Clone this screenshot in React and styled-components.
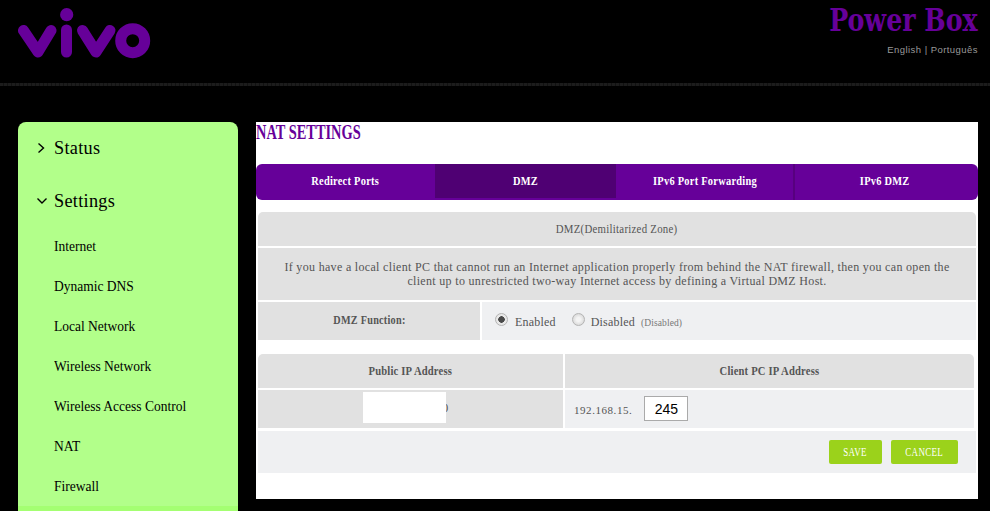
import React from "react";
import styled, { createGlobalStyle } from "styled-components";

const Global = createGlobalStyle`
  html, body { margin: 0; padding: 0; background: #000; height: 511px; overflow: hidden; }
  #root { height: 511px; overflow: hidden; }
  * { box-sizing: border-box; }
`;
const serif = `"Liberation Serif", serif`;

const Page = styled.div`
  width: 990px; height: 511px; overflow: hidden; background: #000;
  display: flex; flex-direction: column;
`;
const Header = styled.header`
  height: 83px; display: flex; justify-content: space-between; padding: 0 12px 0 18px;
  flex: none;
`;
const Logo = styled.svg`
  width: 134px; height: 52px; margin-top: 8px;
`;
const Brand = styled.div`
  display: flex; flex-direction: column; align-items: flex-end;
`;
const Squeeze = styled.span`
  display: inline-block; white-space: nowrap; transform: scaleX(${p => p.$x});
  transform-origin: ${p => p.$origin || "center"};
`;
const BrandName = styled.div`
  font: bold 31px/34px "DejaVu Serif Condensed", "DejaVu Serif", serif; color: #660099; margin-top: 3px;
`;
const Lang = styled.div`
  font: 9.5px/12px "Liberation Sans", sans-serif; letter-spacing: 0.45px; color: #999; margin-top: 7px;
`;
const Rule = styled.div`
  height: 3px; flex: none;
  background: repeating-linear-gradient(90deg, #1c1c1c 0 3px, #111 3px 4px);
`;
const Main = styled.div`
  display: flex; padding: 36px 12px 0 18px; gap: 18px; flex: 1; min-height: 0; align-items: flex-start;
`;
const Side = styled.nav`
  width: 220px; height: 420px; flex: none; background: #b2ff8a; border-radius: 8px 8px 0 0;
  padding-top: 12px; color: #000; font-family: ${serif};
`;
const Top = styled.div`
  height: 28px; display: flex; align-items: center; font-size: 19px; letter-spacing: 0.3px;
  padding-left: 19px; gap: 9px; margin-bottom: ${p => p.$mb}px;
`;
const ChevRight = styled.svg`
  width: 8px; height: 12px; flex: none;
`;
const ChevDown = styled.svg`
  width: 10px; height: 8px; flex: none; margin-right: -2px;
`;
const Sub = styled.div`
  height: 40px; display: flex; align-items: center; padding-left: 36px; font-size: 15px;
`;
const Active = styled.div`
  height: 40px; background: #a4ff72;
`;
const Content = styled.section`
  width: 722px; height: 377px; flex: none; background: #fff; position: relative;
`;
const Title = styled.h1`
  margin: 0; font: bold 20px/20px ${serif}; color: #660099; height: 42px; white-space: nowrap;
`;
const Tabs = styled.div`
  height: 36px; display: grid; grid-template-columns: 179px 181px 177px 185px; background: #660099;
  border-radius: 6px; overflow: hidden;
`;
const Tab = styled.div`
  height: ${p => (p.$active ? "34px" : "36px")}; padding-bottom: ${p => (p.$active ? "0" : "2px")};
  padding-right: ${p => (p.$divided ? "4px" : "0")};
  background: ${p => (p.$active ? "#4f0073" : "transparent")};
  display: flex; align-items: center; justify-content: center; color: #fff;
  font: bold 12px ${serif}; letter-spacing: 0.3px;
  border-left: ${p => (p.$divided ? "2px solid #57007f" : "0")};
`;
const Body = styled.div`
  padding: 12px 2px 0;
`;
const Bar = styled.div`
  background: #e1e1e1; color: #555; font: 12px ${serif}; letter-spacing: 0.3px; text-align: center;
`;
const Heading = styled(Bar)`
  height: 34px; line-height: 34px; border-radius: 5px 5px 0 0; margin-bottom: 2px;
`;
const Desc = styled(Bar)`
  height: 52px; padding: 12px 22px 0; line-height: 14px; margin-bottom: 2px; letter-spacing: 0.32px;
`;
const Row = styled.div`
  display: grid; grid-template-columns: ${p => p.$cols}; gap: 2px; width: ${p => p.$w}px;
  margin-bottom: ${p => p.$mb || 0}px;
`;
const Label = styled(Bar)`
  height: 38px; line-height: 36px; font-weight: ${p => (p.$bold ? "bold" : "normal")};
`;
const Head = styled(Bar)`
  height: 34px; line-height: 34px; font-weight: bold; letter-spacing: 0.2px;
  border-radius: ${p => (p.$right ? "0 5px 0 0" : "5px 0 0 0")};
`;
const Cell = styled.div`
  height: 38px; background: #eff0f2; display: flex; align-items: center; color: #555;
  font: 12px ${serif}; letter-spacing: 0.2px; padding-left: ${p => p.$pl}px;
`;
const Radio = styled.span`
  width: 13px; height: 13px; border-radius: 50%; border: 1px solid #b4b4b4; flex: none; margin-top: -3px;
  background: radial-gradient(circle, ${p => (p.$on ? "#4a4a4a 0 3px, #e8e8e8 3.5px" : "#f4f4f4 0 2px, #d8d8d8 6px")});
`;
const Opt = styled.span`
  margin: 3px ${p => p.$mr}px 0 ${p => p.$ml}px; font-size: 12px;
`;
const Hint = styled.span`
  margin: 4px 0 0 6px; font-size: 9.5px; color: #777; letter-spacing: 0.1px;
`;
const Ip = styled.span`
  font-size: 11px; letter-spacing: 0.55px; color: #555; margin-top: 2px;
`;
const Input = styled.input`
  width: 44px; height: 25px; margin: -1px 0 0 12px; border: 1px solid #aaa; background: #fff; text-align: center;
  font: 14px "Liberation Sans", sans-serif; color: #000; padding: 0; outline: none; border-radius: 0;
`;
const Mask = styled.div`
  position: absolute; left: 107px; top: 270px; width: 83px; height: 31px; background: #fff;
`;
const Ghost = styled.span`
  display: block; text-align: center; padding-left: 70px;
`;
const Actions = styled.div`
  height: 42px; margin-top: 3px; background: #eff0f2; display: flex; align-items: center; justify-content: flex-end;
  gap: 9px; padding: 0 18px 0 0;
`;
const Btn = styled.button`
  width: ${p => p.$w}px; height: 24px; border: 0; border-radius: 2px; background: #9bd21b; color: #fff; padding: 0;
  font: 11.5px ${serif}; letter-spacing: 0.4px;
`;

const subs = ["Internet", "Dynamic DNS", "Local Network", "Wireless Network", "Wireless Access Control", "NAT", "Firewall"];

export default function App() {
  return (
    <Page>
      <Global />
      <Header>
        <Logo viewBox="18 8 134 52" aria-label="vivo">
          <g fill="none" stroke="#660099" strokeWidth="11" strokeLinecap="round" strokeLinejoin="round">
            <path d="M23.5 30.5 L38 52 L51 30.5" />
            <path d="M66.5 30 V52" />
            <path d="M82.5 30.5 L96 52 L110 30.5" />
            <circle cx="132.7" cy="40.7" r="12" />
          </g>
          <circle cx="66.7" cy="14.7" r="6.6" fill="#660099" />
        </Logo>
        <Brand>
          <BrandName><Squeeze $x={0.907} $origin="right">Power Box</Squeeze></BrandName>
          <Lang>English | Português</Lang>
        </Brand>
      </Header>
      <Rule />
      <Main>
        <Side>
          <Top $mb={25}>
            <ChevRight viewBox="0 0 8 12"><path d="M1.5 1.5 L6.5 6 L1.5 10.5" fill="none" stroke="#000" strokeWidth="1.4" /></ChevRight>
            <Squeeze $x={0.96} $origin="left">Status</Squeeze>
          </Top>
          <Top $mb={11}>
            <ChevDown viewBox="0 0 10 8"><path d="M0.5 1.5 L5 6 L9.5 1.5" fill="none" stroke="#000" strokeWidth="1.4" /></ChevDown>
            <Squeeze $x={0.96} $origin="left">Settings</Squeeze>
          </Top>
          {subs.map(s => <Sub key={s}><Squeeze $x={0.9} $origin="left">{s}</Squeeze></Sub>)}
          <Active />
        </Side>
        <Content>
          <Title><Squeeze $x={0.72} $origin="left">NAT SETTINGS</Squeeze></Title>
          <Tabs>
            <Tab><Squeeze $x={0.866}>Redirect Ports</Squeeze></Tab>
            <Tab $active><Squeeze $x={0.866}>DMZ</Squeeze></Tab>
            <Tab><Squeeze $x={0.866}>IPv6 Port Forwarding</Squeeze></Tab>
            <Tab $divided><Squeeze $x={0.866}>IPv6 DMZ</Squeeze></Tab>
          </Tabs>
          <Body>
            <Heading><Squeeze $x={0.9}>DMZ(Demilitarized Zone)</Squeeze></Heading>
            <Desc>If you have a local client PC that cannot run an Internet application properly from behind the NAT firewall, then you can open the client up to unrestricted two-way Internet access by defining a Virtual DMZ Host.</Desc>
            <Row $cols="222px 494px" $w={718} $mb={14}>
              <Label $bold><Squeeze $x={0.85}>DMZ Function:</Squeeze></Label>
              <Cell $pl={13}>
                <Radio $on />
                <Opt $ml={7} $mr={16}>Enabled</Opt>
                <Radio />
                <Opt $ml={6} $mr={0}>Disabled</Opt>
                <Hint>(Disabled)</Hint>
              </Cell>
            </Row>
            <Row $cols="305px 409px" $w={716} $mb={2}>
              <Head><Squeeze $x={0.884}>Public IP Address</Squeeze></Head>
              <Head $right><Squeeze $x={0.884}>Client PC IP Address</Squeeze></Head>
            </Row>
            <Row $cols="305px 409px" $w={716}>
              <Label><Ghost>0</Ghost></Label>
              <Cell $pl={9}>
                <Ip>192.168.15.</Ip>
                <Input defaultValue="245" />
              </Cell>
            </Row>
            <Actions>
              <Btn $w={53}><Squeeze $x={0.78}>SAVE</Squeeze></Btn>
              <Btn $w={67}><Squeeze $x={0.78}>CANCEL</Squeeze></Btn>
            </Actions>
          </Body>
          <Mask />
        </Content>
      </Main>
    </Page>
  );
}
